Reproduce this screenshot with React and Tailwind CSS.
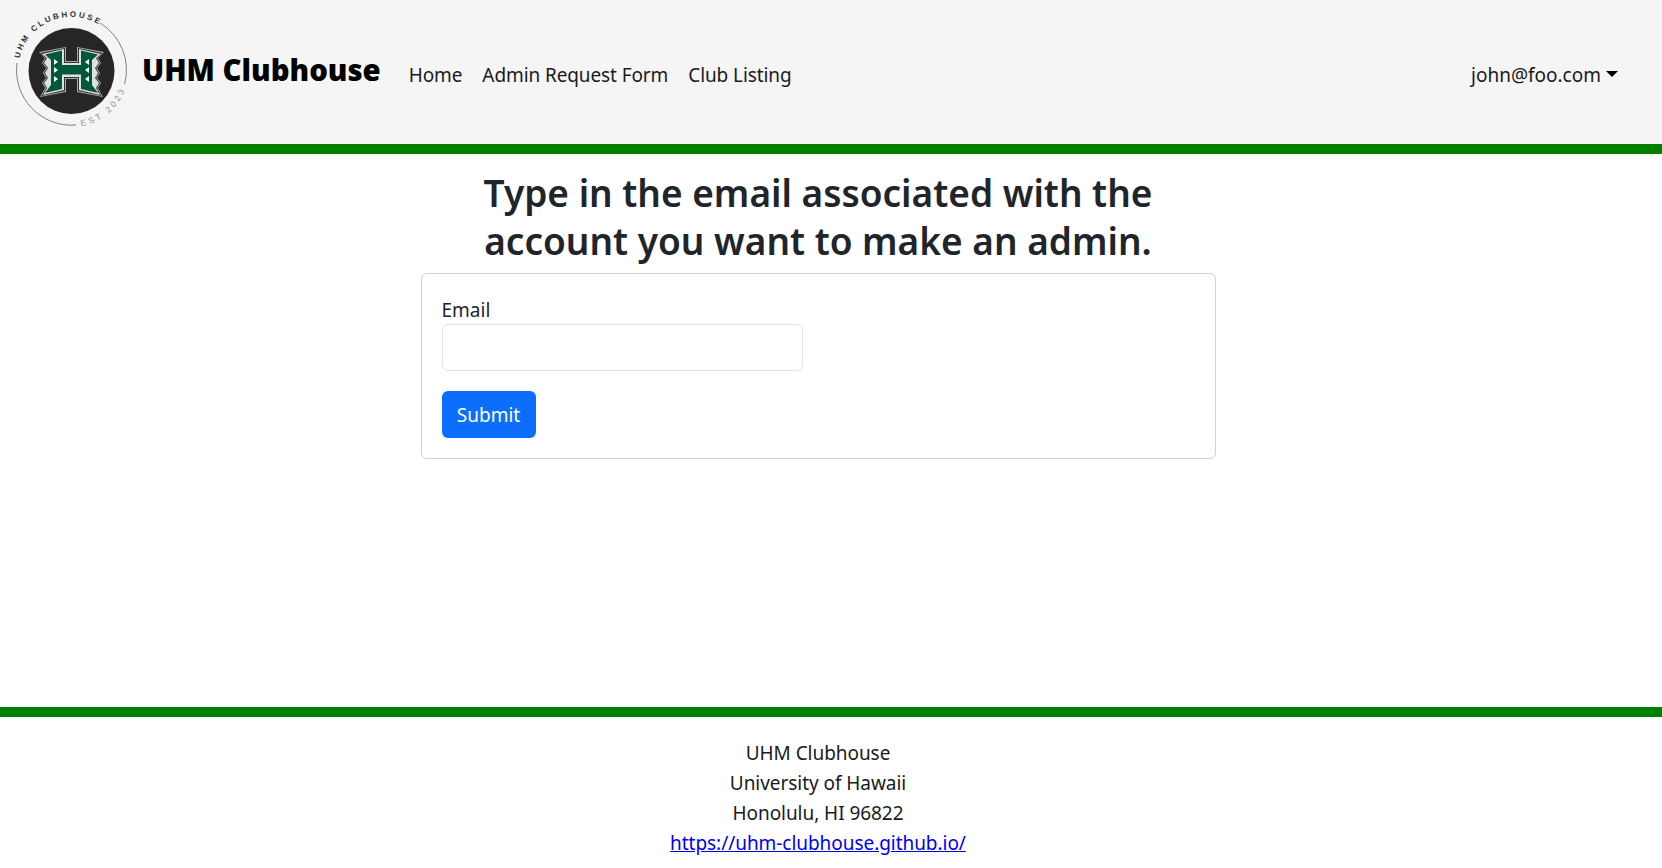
import React from 'react';

const font = { fontFamily: '"Noto Sans", sans-serif' };

// outline of the H: left half drawn top to bottom, right half is its mirror
const hOutline = (i) => {
  const left = [
    [71.5, 61 + i],
    [66 - i, 61 + i],
    [66 - i, 47 + i],
    [39 + i * 1.5, 52 + i],
    [45 + i, 58],
    [42 + i, 63],
    [46 + i, 68],
    [43 + i, 73],
    [46 + i, 78],
    [42 + i, 83],
    [45 + i, 88],
    [40 + i * 1.5, 97 - i],
    [66 - i, 92 - i],
    [66 - i, 79 - i],
    [71.5, 79 - i],
  ];
  const right = [...left].reverse().slice(1, -1).map(([x, y]) => [143 - x, y]);
  return [...left, ...right].map((p) => p.join(',')).join(' ');
};

const Logo = () => (
  <svg width="130" height="144" viewBox="0 0 130 144" className="shrink-0">
    <defs>
      <path id="topArc" d="M 19.5 58.4 A 53 53 0 0 1 99.5 25" />
      <path id="botArc" d="M 81.4 126.1 A 57 57 0 0 0 125 89.5" />
    </defs>
    <path d="M 17 63 A 55 55 0 0 0 76 125" fill="none" stroke="#808080" strokeWidth="1" />
    <path d="M 100 23 A 55 55 0 0 1 124.6 84.2" fill="none" stroke="#808080" strokeWidth="1" />
    <circle cx="71.5" cy="71" r="43" fill="#262626" />
    <text fontSize="8" fill="#333" fontWeight="700" fontFamily="Liberation Sans, sans-serif">
      <textPath href="#topArc" textLength="100">UHM CLUBHOUSE</textPath>
    </text>
    <text fontSize="8.5" fill="#8c8c8c" fontFamily="Liberation Sans, sans-serif">
      <textPath href="#botArc" textLength="58">EST 2023</textPath>
    </text>
    <polygon points={hOutline(0)} fill="#a8a8a8" />
    <polygon points={hOutline(1)} fill="#303030" />
    <polygon points={hOutline(2)} fill="#e0e0e0" />
    <polygon points="45,54.5 62,50.5 62,65 81,65 81,50.5 98,54.5 92,60 92,85 98,93 81,89 81,74.5 62,74.5 62,89 45,93 51,85 51,60" fill="#00583a" />
    <polygon points="54,59 58,62 54,65" fill="#fff" />
    <polygon points="89,59 85,62 89,65" fill="#fff" />
    <polygon points="54,67 58,70 54,73" fill="#fff" />
    <polygon points="89,67 85,70 89,73" fill="#fff" />
    <polygon points="54,76 58,79 54,82" fill="#fff" />
    <polygon points="89,76 85,79 89,82" fill="#fff" />
  </svg>
);

const NavLink = ({ children }) => (
  <a href="#" className="text-[19px] leading-[30px] tracking-[-0.1px] text-[#1a1a1a] whitespace-nowrap">
    {children}
  </a>
);

export default function App() {
  return (
    <div className="min-h-screen flex flex-col bg-white text-[#212529] overflow-hidden" style={font}>
      <nav className="h-[154px] shrink-0 bg-[#f5f5f5] border-b-[10px] border-[#008000] flex items-center pr-[44px]">
        <Logo />
        <span className="ml-[12px] text-[29.3px] leading-[36px] font-black text-black whitespace-nowrap mb-[4px]">
          UHM Clubhouse
        </span>
        <div className="ml-[28px] flex items-center gap-[20px] mt-[6px]">
          <NavLink>Home</NavLink>
          <NavLink>Admin Request Form</NavLink>
          <NavLink>Club Listing</NavLink>
        </div>
        <div className="ml-auto flex items-center mt-[6px]">
          <a href="#" className="text-[19px] leading-[30px] text-[#1a1a1a] whitespace-nowrap">john@foo.com</a>
          <span className="ml-[5px] mb-[2px] w-0 h-0 border-x-[6px] border-x-transparent border-t-[6px] border-t-black" />
        </div>
      </nav>

      <main className="flex-1 pr-[26px] pt-[15px]">
        <h2 className="text-[37px] leading-[48px] font-semibold text-center mb-[8px]">
          Type in the email associated with the
          <br />
          account you want to make an admin.
        </h2>
        <div className="w-[795px] h-[186px] mx-auto border border-[#cfd1d4] rounded-[6px] p-[20px]">
          <label className="block text-[19px] leading-[30px] pt-[1px] h-[30px]">Email</label>
          <input className="block w-[361px] h-[47px] border border-[#dee2e6] rounded-[6px] outline-none" />
          <button className="block mt-[20px] w-[94px] h-[47px] pt-[2px] bg-[#0d6efd] text-white text-[19px] rounded-[6px]">
            Submit
          </button>
        </div>
      </main>

      <footer className="shrink-0 h-[161px] border-t-[10px] border-[#008000] pt-[21px] pr-[26px] text-center text-[19px] leading-[30px] tracking-[-0.05px] text-[#1a1a1a]">
        <div>UHM Clubhouse</div>
        <div>University of Hawaii</div>
        <div>Honolulu, HI 96822</div>
        <a href="#" className="text-[#0000ee] underline">https://uhm-clubhouse.github.io/</a>
      </footer>
    </div>
  );
}
